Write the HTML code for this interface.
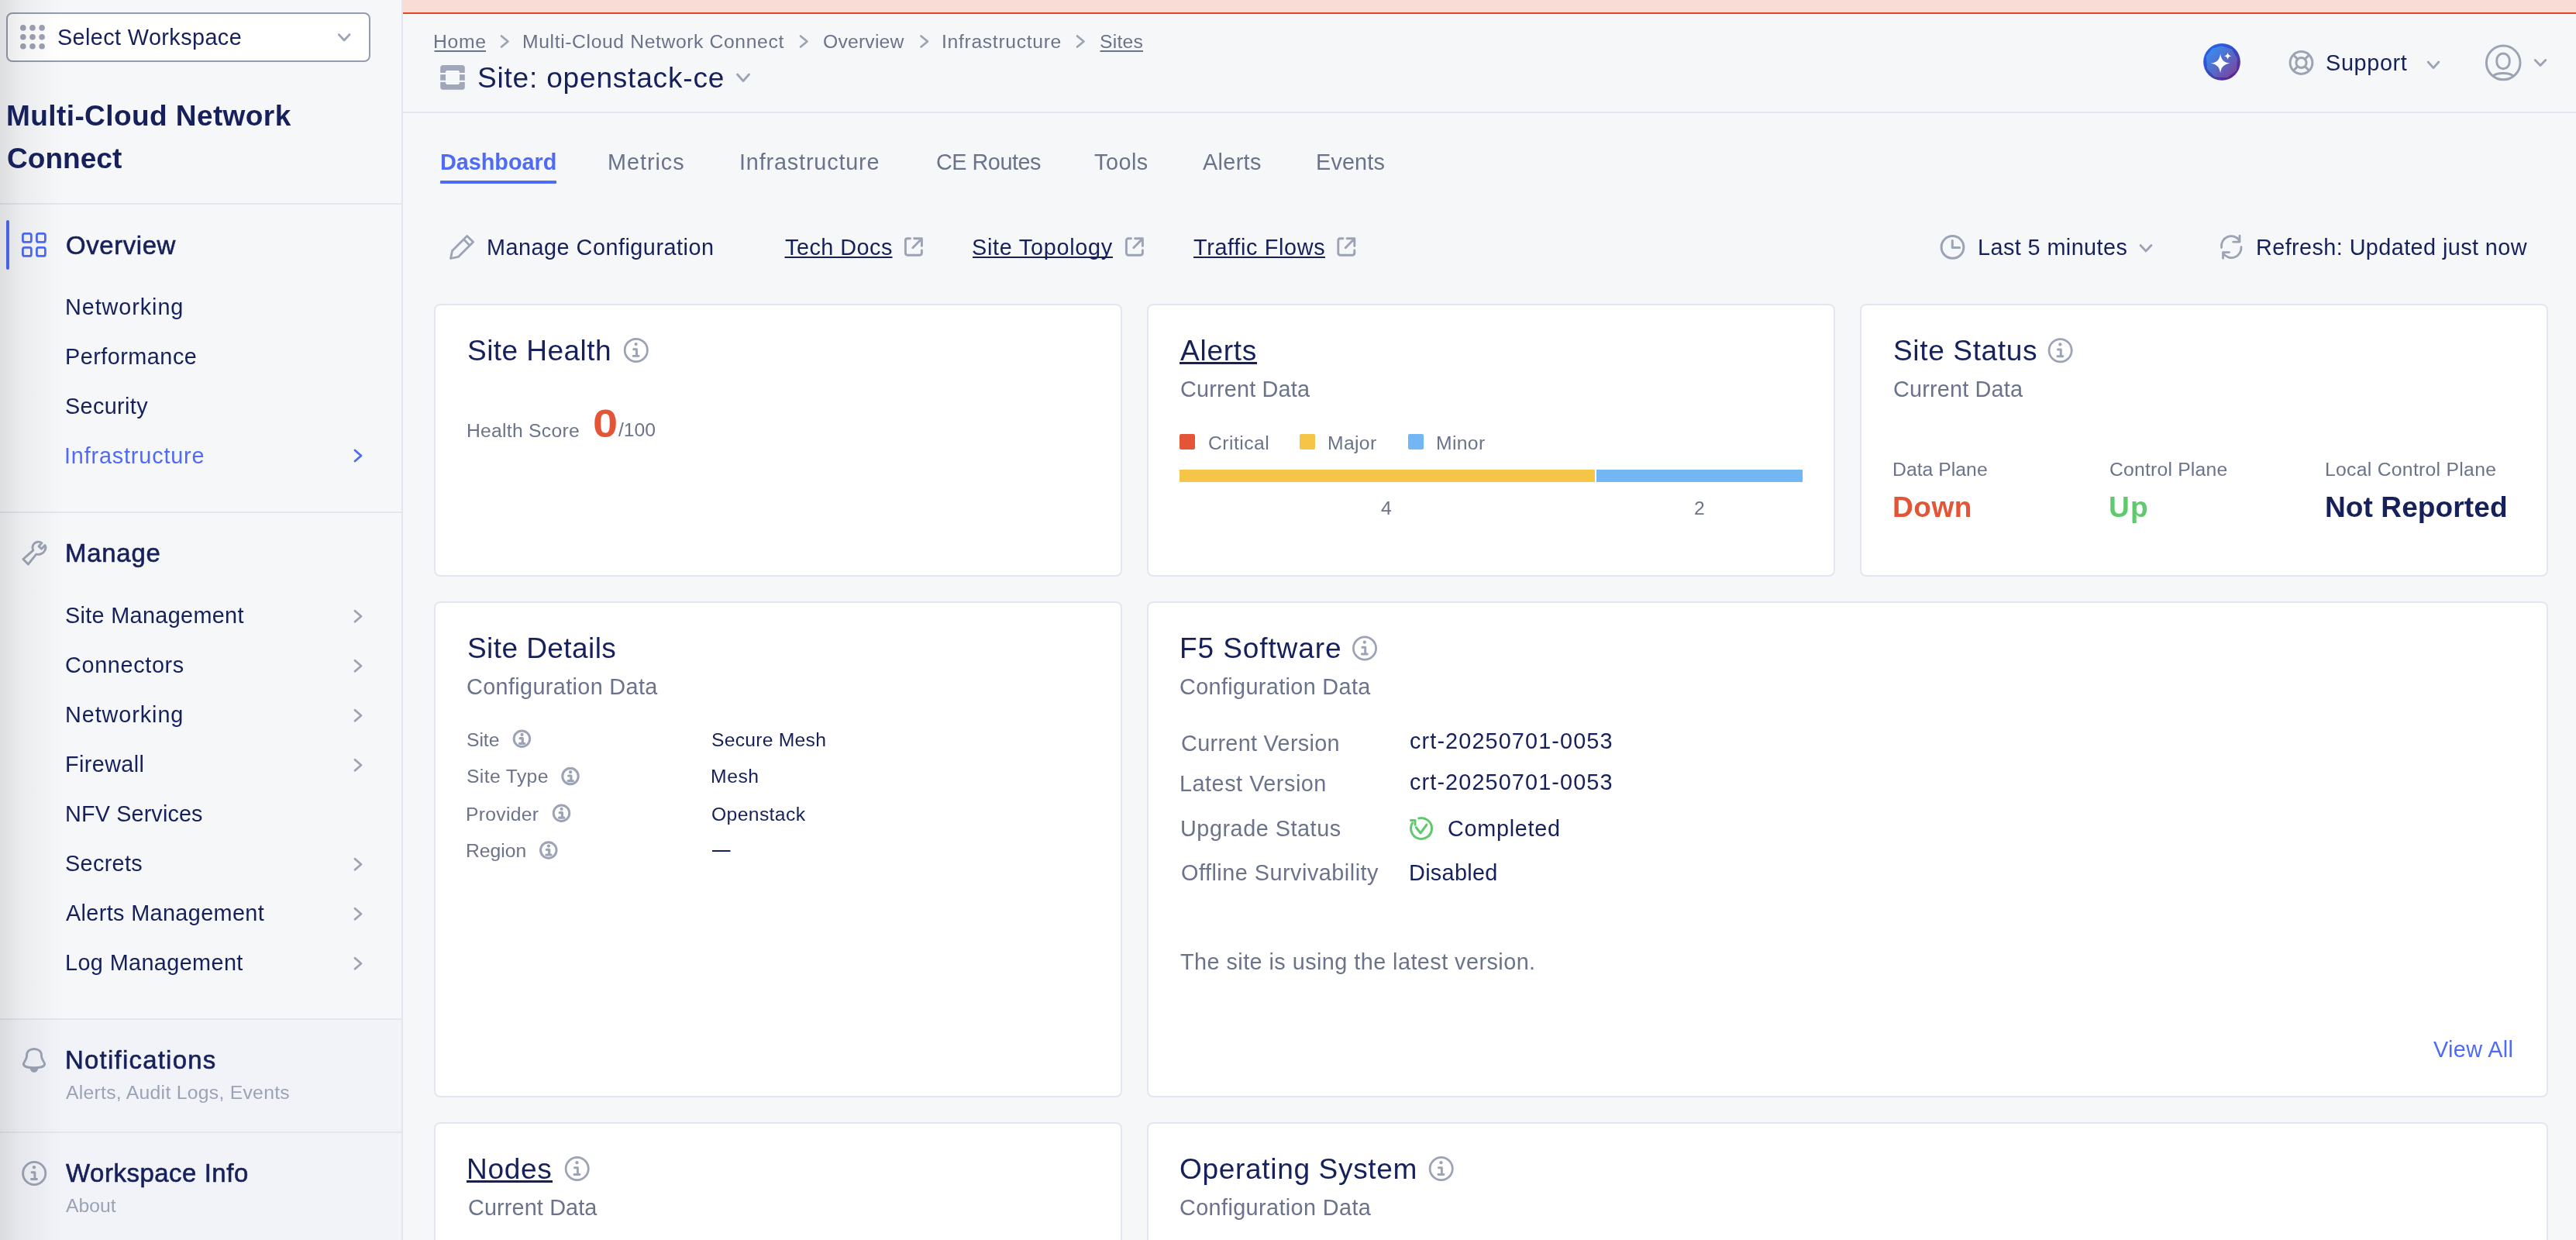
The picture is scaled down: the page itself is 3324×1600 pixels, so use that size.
<!DOCTYPE html>
<html><head><meta charset="utf-8"><title>Site: openstack-ce</title>
<style>
html,body{margin:0;padding:0;width:3324px;height:1600px;overflow:hidden;background:#f6f7f9;}
.t{position:absolute;white-space:nowrap;will-change:transform;font-family:"Liberation Sans",sans-serif;line-height:1;}
svg{position:absolute;left:0;top:0;}
</style></head><body>
<svg width="3324" height="1600" viewBox="0 0 3324 1600"><defs>
<linearGradient id="lsh" x1="0" y1="0" x2="1" y2="0">
<stop offset="0" stop-color="#000" stop-opacity="0.10"/><stop offset="0.35" stop-color="#000" stop-opacity="0.045"/><stop offset="1" stop-color="#000" stop-opacity="0"/></linearGradient>
<linearGradient id="aig" x1="0.15" y1="0.1" x2="0.85" y2="0.95"><stop offset="0" stop-color="#2563f0"/><stop offset="0.5" stop-color="#3a47c0"/><stop offset="1" stop-color="#5e2688"/></linearGradient>
<linearGradient id="aig2" x1="0.1" y1="0.2" x2="0.9" y2="0.9"><stop offset="0" stop-color="#5bc0f0"/><stop offset="1" stop-color="#a074b8"/></linearGradient>
</defs>
<rect x="0" y="0" width="3324" height="1600" fill="#f6f7f9"/>
<rect x="0" y="1316" width="518" height="284" fill="#f2f3f8"/>
<rect x="520" y="0" width="2804" height="16" fill="#f9dcd5"/>
<rect x="520" y="16" width="2804" height="2" fill="#e5461f"/>
<rect x="520" y="144" width="2804" height="2" fill="#e5e7f0"/>
<rect x="518" y="0" width="2" height="1600" fill="#e3e6f1"/>
<rect x="0" y="262" width="518" height="2" fill="#e3e5ef"/>
<rect x="0" y="660" width="518" height="2" fill="#e3e5ef"/>
<rect x="0" y="1314" width="518" height="2" fill="#e3e5ef"/>
<rect x="0" y="1460" width="518" height="2" fill="#e3e5ef"/>
<rect x="9" y="17" width="468" height="62" rx="7" fill="#fff" stroke="#959cad" stroke-width="2"/>
<circle cx="29.8" cy="35.9" r="3.8" fill="#9ba3b4"/>
<circle cx="42" cy="35.9" r="3.8" fill="#9ba3b4"/>
<circle cx="54.1" cy="35.9" r="3.8" fill="#9ba3b4"/>
<circle cx="29.8" cy="47.8" r="3.8" fill="#9ba3b4"/>
<circle cx="42" cy="47.8" r="3.8" fill="#9ba3b4"/>
<circle cx="54.1" cy="47.8" r="3.8" fill="#9ba3b4"/>
<circle cx="29.8" cy="59.7" r="3.8" fill="#9ba3b4"/>
<circle cx="42" cy="59.7" r="3.8" fill="#9ba3b4"/>
<circle cx="54.1" cy="59.7" r="3.8" fill="#9ba3b4"/>
<polyline points="437.3,44.6 444.15,52 451,44.6" fill="none" stroke="#9ba3b4" stroke-width="2.8" stroke-linecap="round" stroke-linejoin="round"/>
<rect x="8" y="284" width="4" height="64" rx="2" fill="#4f6bf5"/>
<rect x="29.4" y="301.4" width="11" height="11" rx="2.5" fill="none" stroke="#4f6bf5" stroke-width="2.8"/>
<rect x="47.4" y="301.4" width="11" height="11" rx="2.5" fill="none" stroke="#4f6bf5" stroke-width="2.8"/>
<rect x="29.4" y="319.4" width="11" height="11" rx="2.5" fill="none" stroke="#4f6bf5" stroke-width="2.8"/>
<rect x="47.4" y="319.4" width="11" height="11" rx="2.5" fill="none" stroke="#4f6bf5" stroke-width="2.8"/>
<polyline points="458,581 466,588.0 458,595" fill="none" stroke="#4f6bf5" stroke-width="2.8" stroke-linecap="round" stroke-linejoin="round"/>
<polyline points="458,788.2 466,795.2 458,802.2" fill="none" stroke="#9ba3b4" stroke-width="2.8" stroke-linecap="round" stroke-linejoin="round"/>
<polyline points="458,852.2 466,859.2 458,866.2" fill="none" stroke="#9ba3b4" stroke-width="2.8" stroke-linecap="round" stroke-linejoin="round"/>
<polyline points="458,916.2 466,923.2 458,930.2" fill="none" stroke="#9ba3b4" stroke-width="2.8" stroke-linecap="round" stroke-linejoin="round"/>
<polyline points="458,980.2 466,987.2 458,994.2" fill="none" stroke="#9ba3b4" stroke-width="2.8" stroke-linecap="round" stroke-linejoin="round"/>
<polyline points="458,1108.2 466,1115.2 458,1122.2" fill="none" stroke="#9ba3b4" stroke-width="2.8" stroke-linecap="round" stroke-linejoin="round"/>
<polyline points="458,1172.2 466,1179.2 458,1186.2" fill="none" stroke="#9ba3b4" stroke-width="2.8" stroke-linecap="round" stroke-linejoin="round"/>
<polyline points="458,1236.2 466,1243.2 458,1250.2" fill="none" stroke="#9ba3b4" stroke-width="2.8" stroke-linecap="round" stroke-linejoin="round"/>
<path d="M29.9 721.5 L36.3 728.1 L46.8 715.1 C51 716 56 714.5 58 710 C59.5 707 59.5 705.5 58 703.5 L53.5 708.3 L50 704.9 L54 700.6 C51 698.5 46 698.5 43.5 702 C41.8 704.5 41.8 708 42.8 710.2 Z" fill="none" stroke="#9ba3b4" stroke-width="2.9" stroke-linejoin="round"/>
<path d="M30.5 1374 C29 1371.5 34.5 1368 34.5 1363 L34.5 1362 C34.5 1356.5 38.5 1353.5 44 1353.5 C49.5 1353.5 53.5 1356.5 53.5 1362 L53.5 1363 C53.5 1368 59 1371.5 57.5 1374 C56 1377 49 1377.8 44 1377.8 C39 1377.8 32 1377 30.5 1374 Z" fill="none" stroke="#9ba3b4" stroke-width="2.9" stroke-linejoin="round"/>
<path d="M38.8 1378.6 A5.2 5.2 0 0 0 49.2 1378.6 Z" fill="#9ba3b4"/>
<circle cx="44.2" cy="1514" r="14.6" fill="none" stroke="#9ba3b4" stroke-width="2.9"/>
<circle cx="44.0" cy="1506.2" r="2.1" fill="#9ba3b4"/>
<path d="M41.0 1512.8 H44.900000000000006 V1521.5 M40.5 1521.5 H47.5" fill="none" stroke="#9ba3b4" stroke-width="2.9" stroke-linecap="round" stroke-linejoin="round"/>
<rect x="0" y="0" width="80" height="1600" fill="url(#lsh)"/>
<polyline points="647,46.5 655.5,53.5 647,60.5" fill="none" stroke="#9ba3b4" stroke-width="2.7" stroke-linecap="round" stroke-linejoin="round"/>
<polyline points="1033,46.5 1041.5,53.5 1033,60.5" fill="none" stroke="#9ba3b4" stroke-width="2.7" stroke-linecap="round" stroke-linejoin="round"/>
<polyline points="1188.5,46.5 1197.0,53.5 1188.5,60.5" fill="none" stroke="#9ba3b4" stroke-width="2.7" stroke-linecap="round" stroke-linejoin="round"/>
<polyline points="1390,46.5 1398.5,53.5 1390,60.5" fill="none" stroke="#9ba3b4" stroke-width="2.7" stroke-linecap="round" stroke-linejoin="round"/>
<rect x="568.2" y="84" width="31.6" height="31.8" rx="3.5" fill="#a0a7b8"/>
<rect x="575" y="91.1" width="17.9" height="17.8" rx="2.8" fill="#f6f7f9"/>
<rect x="566" y="94" width="36" height="2.1" fill="#f6f7f9"/>
<rect x="566" y="103.7" width="36" height="2.2" fill="#f6f7f9"/>
<rect x="575" y="91.1" width="17.9" height="17.8" rx="2.8" fill="#f6f7f9"/>
<polyline points="951.5,96 959.0,104.5 966.5,96" fill="none" stroke="#9ba3b4" stroke-width="2.8" stroke-linecap="round" stroke-linejoin="round"/>
<circle cx="2867" cy="79.8" r="23.9" fill="url(#aig)"/>
<path d="M2866 62 L2878 65.5 L2884.5 76 L2883.5 90 L2873 97.5 L2859 97 L2850.5 88 L2849.5 73 L2856 65 Z" fill="url(#aig2)" stroke="url(#aig2)" stroke-width="5" stroke-linejoin="round" opacity="0.42"/>
<path d="M2865.1 69.39999999999999 C2866.3399999999997 77.336 2869.564 80.56 2877.5 81.8 C2869.564 83.03999999999999 2866.3399999999997 86.264 2865.1 94.2 C2863.86 86.264 2860.636 83.03999999999999 2852.7 81.8 C2860.636 80.56 2863.86 77.336 2865.1 69.39999999999999 Z" fill="#fff"/>
<path d="M2874.6 67.5 C2875.08 70.572 2876.328 71.82 2879.4 72.3 C2876.328 72.78 2875.08 74.02799999999999 2874.6 77.1 C2874.12 74.02799999999999 2872.872 72.78 2869.7999999999997 72.3 C2872.872 71.82 2874.12 70.572 2874.6 67.5 Z" fill="#fff"/>
<circle cx="2969.5" cy="81" r="14.4" fill="none" stroke="#9ba3b4" stroke-width="3"/>
<circle cx="2969.5" cy="81" r="6.6" fill="none" stroke="#9ba3b4" stroke-width="3"/>
<line x1="2974.4" y1="85.9" x2="2979.8" y2="91.3" stroke="#9ba3b4" stroke-width="3"/>
<line x1="2974.4" y1="76.1" x2="2979.8" y2="70.7" stroke="#9ba3b4" stroke-width="3"/>
<line x1="2964.6" y1="85.9" x2="2959.2" y2="91.3" stroke="#9ba3b4" stroke-width="3"/>
<line x1="2964.6" y1="76.1" x2="2959.2" y2="70.7" stroke="#9ba3b4" stroke-width="3"/>
<polyline points="3133.2,80 3140.0,87.6 3146.8,80" fill="none" stroke="#9ba3b4" stroke-width="2.8" stroke-linecap="round" stroke-linejoin="round"/>
<circle cx="3230.2" cy="80.9" r="21.8" fill="none" stroke="#9ba3b4" stroke-width="3"/>
<rect x="3221.8" y="68.9" width="16.4" height="19.8" rx="8.2" ry="8.6" fill="none" stroke="#9ba3b4" stroke-width="3"/>
<path d="M3217.2 98.2 A13.6 5.6 0 0 1 3242.8 98.2" fill="none" stroke="#9ba3b4" stroke-width="3"/>
<polyline points="3271.2,77.6 3278.0,84.6 3284.8,77.6" fill="none" stroke="#9ba3b4" stroke-width="2.8" stroke-linecap="round" stroke-linejoin="round"/>
<rect x="568" y="233" width="150" height="4" rx="1" fill="#4f6bf5"/>
<path d="M581.5 333.5 L583.6 323.5 L602.7 304.4 L610.6 312.2 L591.4 331.4 Z M598.3 308.8 L606.1 316.7" fill="none" stroke="#9ba3b4" stroke-width="2.8" stroke-linejoin="round"/>
<path d="M1174.5 307.8 H1171 a2.6 2.6 0 0 0 -2.6 2.6 V326.6 a2.6 2.6 0 0 0 2.6 2.6 H1186.8 a2.6 2.6 0 0 0 2.6 -2.6 V322.9 M1179.7 307.8 H1189.4 V317.4 M1177.8 319.7 L1188.8 308.4" fill="none" stroke="#9ba3b4" stroke-width="2.9" stroke-linecap="round" stroke-linejoin="round"/>
<path d="M1459.5 307.8 H1456 a2.6 2.6 0 0 0 -2.6 2.6 V326.6 a2.6 2.6 0 0 0 2.6 2.6 H1471.8 a2.6 2.6 0 0 0 2.6 -2.6 V322.9 M1464.7 307.8 H1474.4 V317.4 M1462.8 319.7 L1473.8 308.4" fill="none" stroke="#9ba3b4" stroke-width="2.9" stroke-linecap="round" stroke-linejoin="round"/>
<path d="M1732.9 307.8 H1729.4 a2.6 2.6 0 0 0 -2.6 2.6 V326.6 a2.6 2.6 0 0 0 2.6 2.6 H1745.1999999999998 a2.6 2.6 0 0 0 2.6 -2.6 V322.9 M1738.1 307.8 H1747.8000000000002 V317.4 M1736.1999999999998 319.7 L1747.1999999999998 308.4" fill="none" stroke="#9ba3b4" stroke-width="2.9" stroke-linecap="round" stroke-linejoin="round"/>
<circle cx="2519.5" cy="318.9" r="14.4" fill="none" stroke="#9ba3b4" stroke-width="3"/>
<path d="M2519.3 310.4 V319.6 H2528.6" fill="none" stroke="#9ba3b4" stroke-width="3" stroke-linecap="round" stroke-linejoin="round"/>
<polyline points="2762,316.5 2769.0,324 2776,316.5" fill="none" stroke="#9ba3b4" stroke-width="2.8" stroke-linecap="round" stroke-linejoin="round"/>
<path d="M2866.6 319.4 A12.7 12.7 0 0 1 2889.5 310 M2890 304.1 V312.2 H2881.7 M2892 318.7 A12.7 12.7 0 0 1 2869.2 327.5 M2868.5 333.3 V325.6 H2876.6" fill="none" stroke="#9ba3b4" stroke-width="2.8" stroke-linecap="round" stroke-linejoin="round"/>
<rect x="560.5" y="65" width="66.5" height="2" fill="#6a7389"/>
<rect x="1419.5" y="65" width="55.5" height="2" fill="#6a7389"/>
<rect x="1012.5" y="331" width="139" height="2" fill="#16205a"/>
<rect x="1255" y="331" width="181" height="2" fill="#16205a"/>
<rect x="1540" y="331" width="170" height="2" fill="#16205a"/>
<rect x="561" y="393" width="886" height="350" rx="7" fill="#fff" stroke="#e3e6f1" stroke-width="2"/>
<rect x="1481" y="393" width="886" height="350" rx="7" fill="#fff" stroke="#e3e6f1" stroke-width="2"/>
<rect x="2401" y="393" width="886" height="350" rx="7" fill="#fff" stroke="#e3e6f1" stroke-width="2"/>
<rect x="561" y="777" width="886" height="638" rx="7" fill="#fff" stroke="#e3e6f1" stroke-width="2"/>
<rect x="1481" y="777" width="1806" height="638" rx="7" fill="#fff" stroke="#e3e6f1" stroke-width="2"/>
<rect x="561" y="1449" width="886" height="250" rx="7" fill="#fff" stroke="#e3e6f1" stroke-width="2"/>
<rect x="1481" y="1449" width="1806" height="250" rx="7" fill="#fff" stroke="#e3e6f1" stroke-width="2"/>
<circle cx="820.8" cy="451.9" r="14.6" fill="none" stroke="#9ba3b4" stroke-width="2.75"/>
<circle cx="820.5999999999999" cy="444.09999999999997" r="2.1" fill="#9ba3b4"/>
<path d="M817.5999999999999 450.7 H821.5 V459.4 M817.0999999999999 459.4 H824.0999999999999" fill="none" stroke="#9ba3b4" stroke-width="2.9" stroke-linecap="round" stroke-linejoin="round"/>
<circle cx="2658.6" cy="452.2" r="14.6" fill="none" stroke="#9ba3b4" stroke-width="2.75"/>
<circle cx="2658.4" cy="444.4" r="2.1" fill="#9ba3b4"/>
<path d="M2655.4 451.0 H2659.2999999999997 V459.7 M2654.9 459.7 H2661.9" fill="none" stroke="#9ba3b4" stroke-width="2.9" stroke-linecap="round" stroke-linejoin="round"/>
<circle cx="1761" cy="836.5" r="14.6" fill="none" stroke="#9ba3b4" stroke-width="2.75"/>
<circle cx="1760.8" cy="828.7" r="2.1" fill="#9ba3b4"/>
<path d="M1757.8 835.3 H1761.7 V844.0 M1757.3 844.0 H1764.3" fill="none" stroke="#9ba3b4" stroke-width="2.9" stroke-linecap="round" stroke-linejoin="round"/>
<circle cx="744.7" cy="1508" r="14.6" fill="none" stroke="#9ba3b4" stroke-width="2.75"/>
<circle cx="744.5" cy="1500.2" r="2.1" fill="#9ba3b4"/>
<path d="M741.5 1506.8 H745.4000000000001 V1515.5 M741.0 1515.5 H748.0" fill="none" stroke="#9ba3b4" stroke-width="2.9" stroke-linecap="round" stroke-linejoin="round"/>
<circle cx="1859.7" cy="1508" r="14.6" fill="none" stroke="#9ba3b4" stroke-width="2.75"/>
<circle cx="1859.5" cy="1500.2" r="2.1" fill="#9ba3b4"/>
<path d="M1856.5 1506.8 H1860.4 V1515.5 M1856.0 1515.5 H1863.0" fill="none" stroke="#9ba3b4" stroke-width="2.9" stroke-linecap="round" stroke-linejoin="round"/>
<circle cx="673.4" cy="953.3000000000001" r="10.25" fill="none" stroke="#9ba3b4" stroke-width="3"/>
<circle cx="673.5" cy="947.9000000000001" r="2.1" fill="#9ba3b4"/>
<path d="M671.0 952.7 H674.3 V959.3000000000001 M670.5 959.3000000000001 H676.6999999999999" fill="none" stroke="#9ba3b4" stroke-width="3.2" stroke-linecap="round" stroke-linejoin="round"/>
<circle cx="736" cy="1001.6" r="10.25" fill="none" stroke="#9ba3b4" stroke-width="3"/>
<circle cx="736.1" cy="996.2" r="2.1" fill="#9ba3b4"/>
<path d="M733.6 1001.0 H736.9 V1007.6 M733.1 1007.6 H739.3" fill="none" stroke="#9ba3b4" stroke-width="3.2" stroke-linecap="round" stroke-linejoin="round"/>
<circle cx="724.5" cy="1049.2" r="10.25" fill="none" stroke="#9ba3b4" stroke-width="3"/>
<circle cx="724.6" cy="1043.8" r="2.1" fill="#9ba3b4"/>
<path d="M722.1 1048.6000000000001 H725.4 V1055.2 M721.6 1055.2 H727.8" fill="none" stroke="#9ba3b4" stroke-width="3.2" stroke-linecap="round" stroke-linejoin="round"/>
<circle cx="707.8" cy="1097.0" r="10.25" fill="none" stroke="#9ba3b4" stroke-width="3"/>
<circle cx="707.9" cy="1091.6" r="2.1" fill="#9ba3b4"/>
<path d="M705.4 1096.4 H708.6999999999999 V1103.0 M704.9 1103.0 H711.0999999999999" fill="none" stroke="#9ba3b4" stroke-width="3.2" stroke-linecap="round" stroke-linejoin="round"/>
<rect x="1522" y="467" width="100" height="3" fill="#16205a"/>
<rect x="1522" y="560" width="20" height="20" rx="2" fill="#e45436"/>
<rect x="1677" y="560" width="20" height="20" rx="2" fill="#f5c547"/>
<rect x="1817" y="560" width="20" height="20" rx="2" fill="#72b6f3"/>
<rect x="1522" y="606" width="536" height="16" fill="#f5c547"/>
<rect x="2060" y="606" width="266" height="16" fill="#72b6f3"/>
<rect x="919" y="1097" width="23.5" height="2" fill="#16205a"/>
<path d="M1830.6 1055.9 A13.5 13.5 0 1 1 1822.6 1061.8" fill="none" stroke="#5fc96d" stroke-width="3" stroke-linecap="round"/>
<path d="M1820.5 1058.5 H1826 V1064.2" fill="none" stroke="#5fc96d" stroke-width="3" stroke-linecap="round" stroke-linejoin="round"/>
<path d="M1827.2 1067.5 L1833 1075 L1841 1064" fill="none" stroke="#5fc96d" stroke-width="3" stroke-linecap="round" stroke-linejoin="round"/>
<rect x="602" y="1523" width="111" height="3" fill="#16205a"/>
</svg>
<div class="t" id="t0" style="left:74.12px;top:33.53px;font-size:28.84px;font-weight:normal;color:#16205a;letter-spacing:0.391px;">Select Workspace</div>
<div class="t" id="t1" style="left:8.14px;top:131.47px;font-size:37.08px;font-weight:bold;color:#16205a;letter-spacing:0.381px;">Multi-Cloud Network</div>
<div class="t" id="t2" style="left:9.04px;top:185.97px;font-size:37.08px;font-weight:bold;color:#16205a;letter-spacing:-0.007px;">Connect</div>
<div class="t" id="t3" style="left:84.60px;top:300.65px;font-size:32.96px;font-weight:normal;color:#16205a;letter-spacing:0.571px;-webkit-text-stroke:0.6px #16205a;">Overview</div>
<div class="t" id="t4" style="left:83.70px;top:382.03px;font-size:28.84px;font-weight:normal;color:#16205a;letter-spacing:0.911px;">Networking</div>
<div class="t" id="t5" style="left:83.70px;top:446.03px;font-size:28.84px;font-weight:normal;color:#16205a;letter-spacing:0.478px;">Performance</div>
<div class="t" id="t6" style="left:83.70px;top:509.83px;font-size:28.84px;font-weight:normal;color:#16205a;letter-spacing:0.346px;">Security</div>
<div class="t" id="t7" style="left:82.80px;top:573.83px;font-size:28.84px;font-weight:normal;color:#4f6bf5;letter-spacing:0.823px;">Infrastructure</div>
<div class="t" id="t8" style="left:83.70px;top:698.35px;font-size:32.96px;font-weight:normal;color:#16205a;letter-spacing:0.748px;-webkit-text-stroke:0.6px #16205a;">Manage</div>
<div class="t" id="t9" style="left:83.70px;top:780.03px;font-size:28.84px;font-weight:normal;color:#16205a;letter-spacing:0.321px;">Site Management</div>
<div class="t" id="t10" style="left:83.70px;top:844.03px;font-size:28.84px;font-weight:normal;color:#16205a;letter-spacing:0.644px;">Connectors</div>
<div class="t" id="t11" style="left:83.70px;top:908.03px;font-size:28.84px;font-weight:normal;color:#16205a;letter-spacing:0.911px;">Networking</div>
<div class="t" id="t12" style="left:83.70px;top:972.03px;font-size:28.84px;font-weight:normal;color:#16205a;letter-spacing:0.380px;">Firewall</div>
<div class="t" id="t13" style="left:83.70px;top:1036.03px;font-size:28.84px;font-weight:normal;color:#16205a;letter-spacing:0.118px;">NFV Services</div>
<div class="t" id="t14" style="left:83.70px;top:1100.03px;font-size:28.84px;font-weight:normal;color:#16205a;letter-spacing:0.317px;">Secrets</div>
<div class="t" id="t15" style="left:84.70px;top:1164.03px;font-size:28.84px;font-weight:normal;color:#16205a;letter-spacing:0.357px;">Alerts Management</div>
<div class="t" id="t16" style="left:83.70px;top:1228.03px;font-size:28.84px;font-weight:normal;color:#16205a;letter-spacing:0.380px;">Log Management</div>
<div class="t" id="t17" style="left:84.12px;top:1351.75px;font-size:32.96px;font-weight:normal;color:#16205a;letter-spacing:1.228px;-webkit-text-stroke:0.6px #16205a;">Notifications</div>
<div class="t" id="t18" style="left:84.72px;top:1397.51px;font-size:24.72px;font-weight:normal;color:#9aa3b5;letter-spacing:0.280px;">Alerts, Audit Logs, Events</div>
<div class="t" id="t19" style="left:85.12px;top:1497.55px;font-size:32.96px;font-weight:normal;color:#16205a;letter-spacing:0.529px;-webkit-text-stroke:0.6px #16205a;">Workspace Info</div>
<div class="t" id="t20" style="left:85.12px;top:1543.71px;font-size:24.72px;font-weight:normal;color:#9aa3b5;letter-spacing:0.020px;">About</div>
<div class="t" id="t21" style="left:559.07px;top:41.51px;font-size:24.72px;font-weight:normal;color:#6a7389;letter-spacing:0.707px;">Home</div>
<div class="t" id="t22" style="left:674.20px;top:41.51px;font-size:24.72px;font-weight:normal;color:#6a7389;letter-spacing:0.608px;">Multi-Cloud Network Connect</div>
<div class="t" id="t23" style="left:1062.08px;top:41.51px;font-size:24.72px;font-weight:normal;color:#6a7389;letter-spacing:0.191px;">Overview</div>
<div class="t" id="t24" style="left:1215.20px;top:41.51px;font-size:24.72px;font-weight:normal;color:#6a7389;letter-spacing:0.671px;">Infrastructure</div>
<div class="t" id="t25" style="left:1418.97px;top:41.51px;font-size:24.72px;font-weight:normal;color:#6a7389;letter-spacing:0.213px;">Sites</div>
<div class="t" id="t26" style="left:616.18px;top:82.07px;font-size:37.08px;font-weight:normal;color:#16205a;letter-spacing:0.782px;">Site: openstack-ce</div>
<div class="t" id="t27" style="left:3001.20px;top:66.73px;font-size:28.84px;font-weight:normal;color:#16205a;letter-spacing:0.650px;">Support</div>
<div class="t" id="t28" style="left:567.64px;top:195.33px;font-size:28.84px;font-weight:bold;color:#4f6bf5;letter-spacing:-0.030px;">Dashboard</div>
<div class="t" id="t29" style="left:784.20px;top:195.33px;font-size:28.84px;font-weight:normal;color:#6a7389;letter-spacing:0.957px;">Metrics</div>
<div class="t" id="t30" style="left:954.30px;top:195.33px;font-size:28.84px;font-weight:normal;color:#6a7389;letter-spacing:0.826px;">Infrastructure</div>
<div class="t" id="t31" style="left:1207.56px;top:195.33px;font-size:28.84px;font-weight:normal;color:#6a7389;letter-spacing:-0.505px;">CE Routes</div>
<div class="t" id="t32" style="left:1412.08px;top:195.33px;font-size:28.84px;font-weight:normal;color:#6a7389;letter-spacing:0.475px;">Tools</div>
<div class="t" id="t33" style="left:1552.12px;top:195.33px;font-size:28.84px;font-weight:normal;color:#6a7389;letter-spacing:0.320px;">Alerts</div>
<div class="t" id="t34" style="left:1697.72px;top:195.33px;font-size:28.84px;font-weight:normal;color:#6a7389;letter-spacing:0.148px;">Events</div>
<div class="t" id="t35" style="left:627.72px;top:304.83px;font-size:28.84px;font-weight:normal;color:#16205a;letter-spacing:0.488px;">Manage Configuration</div>
<div class="t" id="t36" style="left:1012.71px;top:304.83px;font-size:28.84px;font-weight:normal;color:#16205a;letter-spacing:0.467px;">Tech Docs</div>
<div class="t" id="t37" style="left:1253.86px;top:304.83px;font-size:28.84px;font-weight:normal;color:#16205a;letter-spacing:0.720px;">Site Topology</div>
<div class="t" id="t38" style="left:1540.13px;top:304.83px;font-size:28.84px;font-weight:normal;color:#16205a;letter-spacing:0.649px;">Traffic Flows</div>
<div class="t" id="t39" style="left:2552.14px;top:304.83px;font-size:28.84px;font-weight:normal;color:#16205a;letter-spacing:0.409px;">Last 5 minutes</div>
<div class="t" id="t40" style="left:2911.16px;top:304.83px;font-size:28.84px;font-weight:normal;color:#16205a;letter-spacing:0.409px;">Refresh: Updated just now</div>
<div class="t" id="t41" style="left:602.64px;top:434.27px;font-size:37.08px;font-weight:normal;color:#16205a;letter-spacing:0.418px;">Site Health</div>
<div class="t" id="t42" style="left:602.16px;top:543.51px;font-size:24.72px;font-weight:normal;color:#6a7389;letter-spacing:0.253px;">Health Score</div>
<div class="t" id="t43" style="left:764.80px;top:521.52px;font-size:49.44px;font-weight:bold;color:#e45436;letter-spacing:0.000px;transform:scaleX(1.17);transform-origin:0 0;">0</div>
<div class="t" id="t44" style="left:798.00px;top:542.81px;font-size:24.72px;font-weight:normal;color:#6a7389;letter-spacing:0.000px;">/100</div>
<div class="t" id="t45" style="left:1522.65px;top:434.27px;font-size:37.08px;font-weight:normal;color:#16205a;letter-spacing:0.706px;">Alerts</div>
<div class="t" id="t46" style="left:1523.04px;top:487.93px;font-size:28.84px;font-weight:normal;color:#6a7389;letter-spacing:0.171px;">Current Data</div>
<div class="t" id="t47" style="left:1559.02px;top:559.61px;font-size:24.72px;font-weight:normal;color:#6a7389;letter-spacing:0.460px;">Critical</div>
<div class="t" id="t48" style="left:1713.16px;top:559.61px;font-size:24.72px;font-weight:normal;color:#6a7389;letter-spacing:0.325px;">Major</div>
<div class="t" id="t49" style="left:1853.14px;top:559.61px;font-size:24.72px;font-weight:normal;color:#6a7389;letter-spacing:0.335px;">Minor</div>
<div class="t" id="t50" style="left:1782.39px;top:644.11px;font-size:24.72px;font-weight:normal;color:#6a7389;letter-spacing:0.000px;">4</div>
<div class="t" id="t51" style="left:2185.55px;top:644.11px;font-size:24.72px;font-weight:normal;color:#6a7389;letter-spacing:0.000px;">2</div>
<div class="t" id="t52" style="left:2442.66px;top:433.87px;font-size:37.08px;font-weight:normal;color:#16205a;letter-spacing:0.626px;">Site Status</div>
<div class="t" id="t53" style="left:2442.96px;top:488.13px;font-size:28.84px;font-weight:normal;color:#6a7389;letter-spacing:0.171px;">Current Data</div>
<div class="t" id="t54" style="left:2442.10px;top:593.95px;font-size:24.72px;font-weight:normal;color:#6a7389;letter-spacing:0.036px;">Data Plane</div>
<div class="t" id="t55" style="left:2721.92px;top:593.95px;font-size:24.72px;font-weight:normal;color:#6a7389;letter-spacing:0.198px;">Control Plane</div>
<div class="t" id="t56" style="left:2999.54px;top:593.95px;font-size:24.72px;font-weight:normal;color:#6a7389;letter-spacing:0.289px;">Local Control Plane</div>
<div class="t" id="t57" style="left:2442.10px;top:636.37px;font-size:37.08px;font-weight:bold;color:#e45436;letter-spacing:0.527px;">Down</div>
<div class="t" id="t58" style="left:2721.02px;top:636.37px;font-size:37.08px;font-weight:bold;color:#5fc96d;letter-spacing:1.240px;">Up</div>
<div class="t" id="t59" style="left:3000.06px;top:636.37px;font-size:37.08px;font-weight:bold;color:#16205a;letter-spacing:0.065px;">Not Reported</div>
<div class="t" id="t60" style="left:602.64px;top:817.97px;font-size:37.08px;font-weight:normal;color:#16205a;letter-spacing:0.393px;">Site Details</div>
<div class="t" id="t61" style="left:602.10px;top:871.83px;font-size:28.84px;font-weight:normal;color:#6a7389;letter-spacing:0.349px;">Configuration Data</div>
<div class="t" id="t62" style="left:602.10px;top:942.68px;font-size:24.72px;font-weight:normal;color:#6a7389;letter-spacing:-0.060px;">Site</div>
<div class="t" id="t63" style="left:602.10px;top:990.21px;font-size:24.72px;font-weight:normal;color:#6a7389;letter-spacing:0.355px;">Site Type</div>
<div class="t" id="t64" style="left:601.20px;top:1038.51px;font-size:24.72px;font-weight:normal;color:#6a7389;letter-spacing:0.269px;">Provider</div>
<div class="t" id="t65" style="left:601.20px;top:1085.61px;font-size:24.72px;font-weight:normal;color:#6a7389;letter-spacing:-0.040px;">Region</div>
<div class="t" id="t66" style="left:918.10px;top:942.68px;font-size:24.72px;font-weight:normal;color:#16205a;letter-spacing:0.224px;">Secure Mesh</div>
<div class="t" id="t67" style="left:917.20px;top:990.21px;font-size:24.72px;font-weight:normal;color:#16205a;letter-spacing:0.547px;">Mesh</div>
<div class="t" id="t68" style="left:918.10px;top:1038.51px;font-size:24.72px;font-weight:normal;color:#16205a;letter-spacing:0.357px;">Openstack</div>
<div class="t" id="t69" style="left:1522.16px;top:818.27px;font-size:37.08px;font-weight:normal;color:#16205a;letter-spacing:0.870px;">F5 Software</div>
<div class="t" id="t70" style="left:1522.06px;top:871.83px;font-size:28.84px;font-weight:normal;color:#6a7389;letter-spacing:0.349px;">Configuration Data</div>
<div class="t" id="t71" style="left:1523.52px;top:945.23px;font-size:28.84px;font-weight:normal;color:#6a7389;letter-spacing:0.309px;">Current Version</div>
<div class="t" id="t72" style="left:1521.72px;top:996.73px;font-size:28.84px;font-weight:normal;color:#6a7389;letter-spacing:0.515px;">Latest Version</div>
<div class="t" id="t73" style="left:1522.62px;top:1054.73px;font-size:28.84px;font-weight:normal;color:#6a7389;letter-spacing:0.523px;">Upgrade Status</div>
<div class="t" id="t74" style="left:1523.52px;top:1111.93px;font-size:28.84px;font-weight:normal;color:#6a7389;letter-spacing:0.494px;">Offline Survivability</div>
<div class="t" id="t75" style="left:1819.02px;top:941.83px;font-size:28.84px;font-weight:normal;color:#16205a;letter-spacing:1.119px;">crt-20250701-0053</div>
<div class="t" id="t76" style="left:1819.02px;top:994.73px;font-size:28.84px;font-weight:normal;color:#16205a;letter-spacing:1.119px;">crt-20250701-0053</div>
<div class="t" id="t77" style="left:1868.16px;top:1054.73px;font-size:28.84px;font-weight:normal;color:#16205a;letter-spacing:0.713px;">Completed</div>
<div class="t" id="t78" style="left:1817.72px;top:1111.83px;font-size:28.84px;font-weight:normal;color:#16205a;letter-spacing:0.311px;">Disabled</div>
<div class="t" id="t79" style="left:1523.02px;top:1226.63px;font-size:28.84px;font-weight:normal;color:#6a7389;letter-spacing:0.441px;">The site is using the latest version.</div>
<div class="t" id="t80" style="left:3140.10px;top:1339.73px;font-size:28.84px;font-weight:normal;color:#4f6bf5;letter-spacing:0.351px;">View All</div>
<div class="t" id="t81" style="left:602.17px;top:1490.47px;font-size:37.08px;font-weight:normal;color:#16205a;letter-spacing:0.662px;">Nodes</div>
<div class="t" id="t82" style="left:603.52px;top:1543.83px;font-size:28.84px;font-weight:normal;color:#6a7389;letter-spacing:0.125px;">Current Data</div>
<div class="t" id="t83" style="left:1522.38px;top:1490.47px;font-size:37.08px;font-weight:normal;color:#16205a;letter-spacing:0.648px;">Operating System</div>
<div class="t" id="t84" style="left:1522.08px;top:1543.83px;font-size:28.84px;font-weight:normal;color:#6a7389;letter-spacing:0.381px;">Configuration Data</div>
</body></html>
